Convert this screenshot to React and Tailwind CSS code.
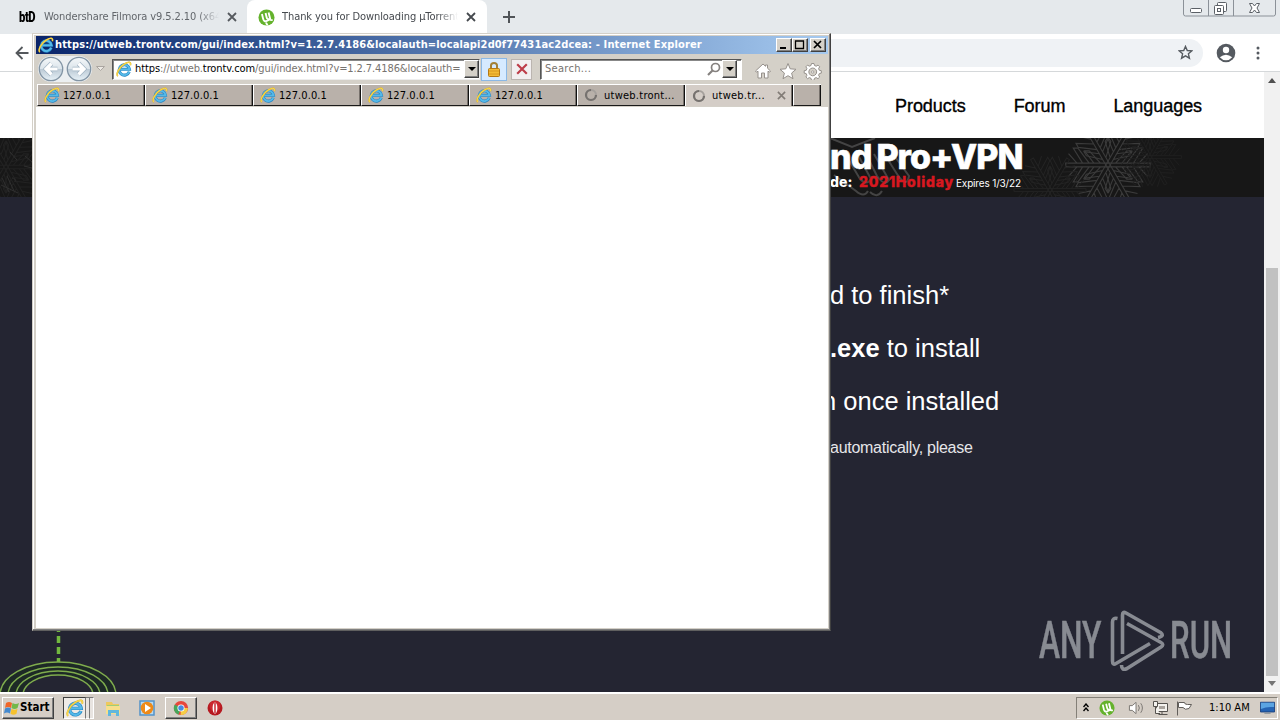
import React from "react";

const tahoma = "font-['DejaVu_Sans_Condensed','DejaVu_Sans',sans-serif] [font-stretch:condensed]";
const raised = "border border-t-white border-l-white border-r-[#404040] border-b-[#404040] shadow-[inset_-1px_-1px_0_#808080]";

function IELogo({ className }) {
  return (
    <svg viewBox="0 0 18 18" className={className}>
      <path d="M14.900 12A5.800 5.800 0 1 1 15.200 9.400H5" fill="none" stroke="#2686c4" strokeWidth="3.400" />
      <path d="M14.900 12A5.800 5.800 0 1 1 15.200 9.400H5" fill="none" stroke="#55b9e8" strokeWidth="2.200" />
      <path d="M2.200 16.800C-.7 15.500 3.600 6.600 9.400 3.300 14.200.5 17.300.8 16.200 4.700" fill="none" stroke="#d9a928" strokeWidth="1.800" />
      <path d="M2.200 16.800C-.7 15.500 3.600 6.600 9.400 3.300 14.200.5 17.300.8 16.200 4.700" fill="none" stroke="#f6d84a" strokeWidth="1.300" />
    </svg>
  );
}

function UTorrent({ className }) {
  return (
    <svg viewBox="0 0 18 18" className={className}>
      <circle cx="9" cy="9" r="8.5" fill="#64b22c" />
      <path d="M4.2 5.2 5.500 10.700Q6.400 13.900 9.300 12.700L12.500 11.100M8 4.200 9.200 9.100Q9.800 11.400 11.800 10.400M11.200 3.600 13 10.800Q13.500 12.400 15.500 11.400M8.500 14.200Q9 16 10.300 17" fill="none" stroke="#fff" strokeWidth="2" />
    </svg>
  );
}

function Close({ className }) {
  return (
    <svg viewBox="0 0 10 10" className={className}>
      <path d="m1 1 8 8M9 1 1 9" fill="none" stroke="currentColor" strokeWidth="1.8" />
    </svg>
  );
}

function ChromeTabs() {
  return (
    <div className="flex h-[34px] shrink-0 bg-[#e5e9ec]">
      <div className="flex w-[247px] items-center pl-[19px]">
        <span className="w-[25px] font-['Roboto',sans-serif] text-[14px] leading-4 font-black tracking-[-0.500px] text-black">
          <span className="inline-block origin-left scale-x-[.8]">btD</span>
        </span>
        <span className={`w-[175px] overflow-hidden text-[11px] whitespace-nowrap text-[#62666b] tracking-[-0.08px] ${tahoma} [mask-image:linear-gradient(90deg,#000_88%,transparent)]`}>Wondershare Filmora v9.5.2.10 (x64)</span>
        <Close className="ml-[8px] size-[10px] text-[#55595e]" />
      </div>
      <div className="flex w-[240px] items-center rounded-t-lg bg-white pl-[11px]">
        <UTorrent className="size-[17px]" />
        <span className={`ml-[7px] w-[176px] overflow-hidden text-[11px] whitespace-nowrap text-[#45494e] tracking-[-0.08px] ${tahoma} [mask-image:linear-gradient(90deg,#000_88%,transparent)]`}>Thank you for Downloading µTorrent</span>
        <Close className="ml-[8px] size-[10px] text-[#45494e]" />
      </div>
      <svg viewBox="0 0 12 12" className="mt-[11px] ml-[16px] size-[12px]">
        <path d="M6 0v12M0 6h12" stroke="#505458" strokeWidth="2" />
      </svg>
      <svg viewBox="0 0 94 18" className="mr-[3px] ml-auto h-[18px] w-[94px]">
        <path d="M.500 0v14q0 2 2 2h88q2 0 2-2V0M25.500 0v16M50.500 0v16" fill="none" stroke="#8b9198" />
        <g fill="#fff" stroke="#5b6066">
          <rect x="7.500" y="8.500" width="11" height="4" rx="1" />
          <rect x="34.500" y="2.500" width="9" height="9" rx="1" />
          <rect x="31.500" y="5.500" width="9" height="9" rx="1" />
          <rect x="34.500" y="8.500" width="3" height="3" />
          <path d="M66.500 3.500h3l2 2.500 2-2.500h3L74 8l2.500 4.500h-3l-2-2.500-2 2.500h-3L69 8z" />
        </g>
      </svg>
    </div>
  );
}

function ChromeToolbar() {
  return (
    <div className="flex h-[38px] shrink-0 items-center border-b border-[#d5d8da] bg-white">
      <svg viewBox="0 0 14 14" className="ml-[15px] size-[14px]">
        <path d="M13.500 7H1.500M7.500 1 1.500 7l6 6" fill="none" stroke="#54585c" strokeWidth="1.800" />
      </svg>
      <div className="ml-[40px] flex h-[28px] w-[1134px] items-center justify-end rounded-full bg-[#eff2f5] pr-[10px]">
        <svg viewBox="0 0 16 16" className="size-[15px]">
          <path d="m8 1.500 1.900 4.400 4.700.4-3.500 3.100 1.100 4.700L8 11.600l-4.200 2.500 1.100-4.700-3.500-3.100 4.700-.4z" fill="none" stroke="#565b60" strokeWidth="1.500" />
        </svg>
      </div>
      <svg viewBox="0 0 20 20" className="ml-[13px] size-[20px]">
        <circle cx="10" cy="10" r="9.300" fill="#555a60" />
        <circle cx="10" cy="7" r="3.200" fill="#fff" />
        <path d="M3.800 14.200Q10 9.200 16.200 14.200 13.500 17.300 10 17.300T3.800 14.200" fill="#fff" />
      </svg>
      <svg viewBox="0 0 4 14" className="ml-[20px] h-[14px] w-[4px]" fill="#555a60">
        <circle cx="2" cy="2" r="1.500" /><circle cx="2" cy="7" r="1.500" /><circle cx="2" cy="12" r="1.500" />
      </svg>
    </div>
  );
}

function Snowflake({ className }) {
  return (
    <svg viewBox="-50 -50 100 100" className={className} fill="none" stroke="currentColor" strokeWidth="1.200">
      {[30, 90, 150, 210, 270, 330].map((a) => (
        <g key={a} transform={`rotate(${a})`}>
          <path d="M-2 0V-45H2V0M-2-8-15-20V-25L-2-15M2-8 15-20V-25L2-15M-2-20-18-32V-37L-2-27M2-20 18-32V-37L2-27M-2-33-12-42M2-33 12-42" />
        </g>
      ))}
    </svg>
  );
}

function Banner() {
  return (
    <div className="relative h-[59px] shrink-0 overflow-hidden bg-[#171717]">
      <Snowflake className="absolute top-[-20px] left-[1061px] size-[94px] text-[#3b3b3b]" />
      <Snowflake className="absolute top-[-16px] left-[1115px] size-[70px] text-[#202020]" />
      <Snowflake className="absolute top-[12px] left-[1010px] size-[80px] text-[#242424]" />
      <Snowflake className="absolute top-[-15px] left-[-38px] size-[88px] text-[#222]" />
      <svg viewBox="0 0 32 59" className="absolute top-0 left-0 h-[59px] w-[32px]" fill="none" stroke="#303030">
        <path d="M2 40 9 54M7 38l7 15M12 40q4 0 3 4M1 47l17 8M25 18l7 6M24 28l8 2M10 14l7 8" />
      </svg>
      <svg viewBox="0 0 100 59" className="absolute top-0 left-[825px] h-[59px] w-[100px]" fill="none" stroke="#444" strokeWidth="2">
        <path d="M5 0 27 9 50 0M22 19 35 41Q42 48 46 41L33 17M41 16 52 38Q60 49 64 42L49 16M58 14 72 36Q82 51 84 38L68 16M9 37 31 53Q39 60 43 53M45 54Q52 61 57 53" />
      </svg>
      <div className="relative ml-[830px] font-['Inter',sans-serif] whitespace-nowrap text-white">
        <div className="h-[37px] text-[34px] leading-[37px] font-extrabold tracking-[-0.950px] [-webkit-text-stroke:0.600px_white]">nd<span className="ml-[5px]">Pro+VPN</span></div>
        <div className="flex items-baseline text-[14px] leading-[14px] font-extrabold">
          <span className="w-[29px] tracking-[0.100px]">de:</span>
          <span className="w-[97px] text-[#d71820] tracking-[0.780px] [-webkit-text-stroke:0.400px_#d71820]">2021Holiday</span>
          <span className="text-[10px] font-normal tracking-[-0.160px]">Expires 1/3/22</span>
        </div>
      </div>
    </div>
  );
}

function Watermark() {
  return (
    <div className="absolute top-[538px] left-[1039px] flex h-[62px] w-[194px] items-center font-['Roboto',sans-serif] text-[52px] leading-[62px] font-medium text-[#888b92]">
      <span className="w-[71px] [-webkit-text-stroke:0.500px_#888b92]"><span className="inline-block origin-left scale-x-[.61]">ANY</span></span>
      <svg viewBox="0 0 56 62" className="h-[62px] w-[56px] shrink-0" fill="none" stroke="currentColor" strokeWidth="3.600" strokeLinejoin="round">
        <path d="M7.500 8.500Q2.500 7.500 2.500 12V51Q2.500 55.500 6 53.500L40 33.500" />
        <path d="M12.500 44V5Q12.500 1 16 3L50.500 22.500Q55 26 48 27.500" />
        <path d="M17 13.500 51 32.500Q54.500 34.500 51 37L17 58.500Q11.500 61 11.500 55" />
      </svg>
      <span className="ml-[4px] [-webkit-text-stroke:0.500px_#888b92]"><span className="inline-block origin-left scale-x-[.600]">RUN</span></span>
    </div>
  );
}

function WebPage() {
  return (
    <div className="flex h-[620px] shrink-0">
      <div className="relative flex w-[1264px] flex-col overflow-hidden bg-[#242532] font-['Liberation_Sans',sans-serif]">
        <div className="flex h-[66px] shrink-0 items-center gap-[48px] bg-white pt-[2px] pl-[895px] text-[18px] tracking-[-0.050px] text-black [-webkit-text-stroke:0.350px_black]">
          <span>Products</span><span>Forum</span><span>Languages</span>
        </div>
        <Banner />
        <div className="ml-[830px] pt-[72px] text-[25.500px] whitespace-nowrap text-white">
          <p className="h-[53px] leading-[53px]">d to finish*</p>
          <p className="h-[53px] leading-[53px]"><b>.exe</b> to install</p>
          <p className="-ml-[8px] h-[53px] leading-[53px]">n once installed</p>
          <p className="h-[40px] text-[16px] leading-[40px] tracking-[-0.270px] text-[#e6e6e9]">automatically, please</p>
        </div>
        <svg viewBox="0 0 120 62" className="absolute bottom-0 left-0 h-[62px] w-[120px]" fill="none" stroke="#7fac4d" strokeWidth="1.400">
          <path d="M58.500 1V32" stroke="#72b83f" strokeWidth="3.500" strokeDasharray="7 4" strokeDashoffset="6" />
          <ellipse cx="58" cy="65" rx="58" ry="33" fill="#1d2926" />
          <ellipse cx="58" cy="65" rx="50" ry="28" /><ellipse cx="58" cy="65" rx="42" ry="24" />
          <ellipse cx="58" cy="65" rx="35" ry="20" fill="#242532" />
        </svg>
        <Watermark />
      </div>
      <div className="flex w-[16px] flex-col items-center bg-[#f1f1f1]">
        <svg viewBox="0 0 16 16" className="size-[16px]"><path d="M4 11 8 6l4 5z" fill="#505050" /></svg>
        <div className="mt-[180px] h-[408px] w-[12px] bg-[#c1c1c1]" />
        <svg viewBox="0 0 16 16" className="size-[16px]"><path d="M4 5h8l-4 5z" fill="#757575" /></svg>
      </div>
    </div>
  );
}

function CaptionButton({ kind }) {
  return (
    <span className={`h-[14px] w-[16px] bg-[#d4d0c8] ${raised}`}>
      <svg viewBox="0 0 14 12" className="h-[12px] w-[14px]" fill="none" stroke="#000">
        {kind === "min" && <path d="M3 9h6" strokeWidth="2" />}
        {kind === "max" && <path d="M2.500 1.500v8h8v-8M2 2h9" strokeWidth="1.300" />}
        {kind === "close" && <path d="m3 2 7 7m0-7-7 7" strokeWidth="1.700" />}
      </svg>
    </span>
  );
}

function DropButton() {
  return (
    <span className={`flex h-[18px] w-[15px] shrink-0 items-center justify-center bg-[#d4d0c8] ${raised}`}>
      <svg viewBox="0 0 8 4" className="h-[4px] w-[8px]"><path d="M0 0h8L4 4z" /></svg>
    </span>
  );
}

function NavCircle({ flip }) {
  return (
    <svg viewBox="0 0 26 26" className="size-[26px] shrink-0">
      <defs><linearGradient id="orb" x2="0" y2="1"><stop stopColor="#f5f8fa" /><stop offset=".48" stopColor="#dce5eb" /><stop offset=".52" stopColor="#bdcbd6" /><stop offset="1" stopColor="#e8f2f8" /></linearGradient></defs>
      <circle cx="13" cy="13" r="11.700" fill="url(#orb)" stroke="#8294a4" strokeWidth="1.300" />
      <g transform={flip ? "rotate(180 13 13)" : undefined} fill="none">
        <path d="M19.500 13H8.500M13.500 7.500 8 13l5.500 5.500" stroke="#a1b4c3" strokeWidth="4.600" />
        <path d="M19.500 13H8.500M13.500 7.500 8 13l5.500 5.500" stroke="#fff" strokeWidth="3.200" />
      </g>
    </svg>
  );
}

function Spinner() {
  return (
    <svg viewBox="0 0 14 14" className="size-[14px] shrink-0" fill="none">
      <circle cx="7" cy="7" r="5" stroke="#a5a09c" strokeWidth="2" />
      <path d="M7 2a5 5 0 1 0 5 5" stroke="#76726f" strokeWidth="2.200" />
    </svg>
  );
}

function IEWindow() {
  return (
    <div className={`absolute top-[33px] left-[32px] flex h-[598px] w-[799px] flex-col border border-t-[#d4d0c8] border-l-[#d4d0c8] border-r-[#404040] border-b-[#606060] bg-[#d4d0c8] pt-[2px] pr-px pb-px pl-[3px] shadow-[inset_-1px_-1px_0_#808080,inset_1px_1px_0_#fff] text-[11px] ${tahoma}`}>
      <div className="mr-px flex h-[18px] shrink-0 items-center bg-linear-to-r from-[#0a246a] to-[#a6caf0] pr-[2px] pl-[2px] text-white">
        <IELogo className="size-[16px]" />
        <span className="ml-px pt-px font-bold whitespace-nowrap tracking-[0.135px]">https://utweb.trontv.com/gui/index.html?v=1.2.7.4186&amp;localauth=localapi2d0f77431ac2dcea: - Internet Explorer</span>
        <span className="ml-auto flex"><CaptionButton kind="min" /><CaptionButton kind="max" /><span className="ml-[2px] flex"><CaptionButton kind="close" /></span></span>
      </div>
      <div className="flex h-[30px] shrink-0 items-center pl-[2px]">
        <div className="flex gap-[2px] rounded-full bg-[#eceff1]"><NavCircle /><NavCircle flip /></div>
        <svg viewBox="0 0 9 6" className="ml-[4px] h-[6px] w-[9px]"><path d="M.5.500h8l-4 4z" fill="#ece9e4" stroke="#aaa5a0" /></svg>
        <div className="ml-[7px] flex h-[21px] w-[368px] items-center border border-t-[#555] border-l-[#555] border-[#eee] bg-white shadow-[inset_1px_1px_0_#888]">
          <IELogo className="ml-[3px] size-[16px]" />
          <span className="ml-[3px] flex-1 overflow-hidden pt-px whitespace-nowrap text-[#77736f] tracking-[-0.100px]"><span className="text-black">https</span>://utweb.<span className="text-black">trontv.com</span>/gui/index.html?v=1.2.7.4186&amp;localauth=</span>
          <DropButton />
        </div>
        <div className="ml-px flex h-[23px] w-[26px] items-center justify-center border border-[#8bb8e5] bg-[#d6eaff]">
          <svg viewBox="0 0 14 16" className="h-[16px] w-[14px]">
            <path d="M4 8V4.500Q4 2 7 2t3 2.500V8" fill="none" stroke="#a38136" strokeWidth="2" />
            <rect x="1.500" y="7.500" width="11" height="8" rx="1" fill="#f3bb35" stroke="#b57814" />
            <path d="M2 10h10M2 13h10" stroke="#d99621" />
          </svg>
        </div>
        <div className="ml-[4px] flex h-[21px] w-[21px] items-center justify-center border border-[#bbb5b0] bg-[#f2eff0]">
          <Close className="size-[12px] text-[#bd3d49]" />
        </div>
        <div className="ml-[8px] flex h-[21px] w-[202px] items-center border border-t-[#555] border-l-[#555] border-white bg-white pl-[4px] text-[#77736f] shadow-[inset_1px_1px_0_#888]">
          <span className="pt-px tracking-[0.300px]">Search...</span>
          <svg viewBox="0 0 14 14" className="mr-px ml-auto size-[14px]" fill="none" stroke="#85817f" strokeWidth="1.700"><circle cx="8.500" cy="5.500" r="4" /><path d="m5.500 8.500-4.500 4.500" strokeWidth="2.200" /></svg>
          <DropButton /><span className="w-[4px]" />
        </div>
        <svg viewBox="0 0 68 18" className="mt-[3px] ml-[12px] h-[18px] w-[68px]" fill="#fff" stroke="#96918c">
          <path d="M1.500 9 9 2l2.500 2.300V3h2v3.200L16.500 9l-1 1.200-1.500-1V16h-3.500v-5h-3v5H4V9.200l-1.500 1z" />
          <path d="m34 1.500 2.200 5.300 5.800.5-4.400 3.800L39 16.700l-5-3-5 3 1.400-5.600L26 7.300l5.800-.5z" />
          <path fillRule="evenodd" d="m57.500 1.500 2.500 0 .5 2 1.700.7 1.800-1.100 1.700 1.700L64.600 6.600l.7 1.700 2 .4v2.400l-2 .5-.7 1.700 1.100 1.700-1.700 1.700-1.800-1.100-1.700.7-.5 2h-2.500l-.5-2-1.700-.7-1.700 1.100-1.700-1.700 1-1.700-.7-1.700-2-.5V8.700l2-.4.7-1.700-1-1.800 1.700-1.700 1.700 1.100 1.700-.7zM58.700 6a3.900 3.900 0 1 0 .1 0z" />
          <circle cx="58.700" cy="10" r="1.200" stroke="#a5a09b" />
        </svg>
      </div>
      <div className="flex h-[23px] shrink-0 pl-px">
        {[0, 1, 2, 3, 4, 5, 6].map((i) => (
          <div key={i} className={`flex h-[22px] w-[108px] items-center border-t border-l border-white pl-[6px] shadow-[inset_-1px_0_0_#111,inset_-2px_0_0_#77716c] ${i === 6 ? "bg-[#d4cdc7]" : "border-b border-b-[#1a1a1a] bg-[#b9b1aa]"}`}>
            {i < 5 ? <IELogo className="size-[16px] shrink-0" /> : <Spinner />}
            <span className={`pt-[2px] whitespace-nowrap text-black ${i < 5 ? "ml-[3px] tracking-[0.080px]" : "ml-[6px] tracking-[0.250px]"}`}>{i < 5 ? "127.0.0.1" : i === 5 ? "utweb.tront..." : "utweb.tr..."}</span>
            {i === 6 && <Close className="mr-[7px] ml-auto size-[9px] text-[#827c77]" />}
          </div>
        ))}
        <div className="h-[22px] w-[28px] border-t border-l border-b border-white border-b-[#1a1a1a] bg-[#b9b1aa] shadow-[inset_-1px_0_0_#111,inset_-2px_0_0_#77716c]" />
      </div>
      <div className="flex-1 border-r border-b border-[#d4d0c8] bg-white" />
    </div>
  );
}

function Taskbar() {
  return (
    <div className={`flex h-[28px] shrink-0 items-center border-t-2 border-white bg-[#d5cec6] pt-px pl-[2px] text-[11px] text-black ${tahoma}`}>
      <div className={`flex h-[22px] w-[52px] items-center ${raised}`}>
        <svg viewBox="0 0 16 16" className="ml-px size-[16px]">
          <path d="M2 3Q5 1 8 3L7 8Q4 6 1 8z" fill="#ef6629" /><path d="M8.500 3q3 2 6.500 0l-1.500 5q-3 2-6 0z" fill="#72b84a" />
          <path d="M1 8.500q3-2 6 0l-1 5q-3-2-6 0z" fill="#4389cf" /><path d="M7.500 8.700q3 2 6 0l-1 5q-3 2-6 0z" fill="#f6c22e" />
        </svg>
        <span className="text-[11.500px] font-bold">Start</span>
      </div>
      <div className="ml-[9px] flex h-[22px] w-[23px] items-center justify-center border border-t-[#404040] border-l-[#404040] border-r-[#777] border-b-white bg-[#eeeae6]"><IELogo className="size-[18px]" /></div>
      <div className="h-[22px] w-[4px] border border-l-0 border-t-[#777] border-r-[#777] border-b-white bg-[#e8e4e0]" />
      <div className="h-[22px] w-[4px] border border-l-0 border-t-[#777] border-white bg-[#e8e4e0]" />
      <svg viewBox="0 0 18 18" className="ml-[10px] size-[18px]">
        <path d="M2 3h6l1 2h6v10H2z" fill="#eec95d" /><path d="M3 6h12v3H3z" fill="#9dcf79" /><path d="M2 7h14v8H2z" fill="#f7df8c" /><path d="M4 17v-6h11v6h-3v-3H7v3z" fill="#60b7dd" />
      </svg>
      <svg viewBox="0 0 18 18" className="ml-[16px] size-[18px]">
        <path d="M2 2h14v14H2z" fill="#b7daf2" stroke="#5393c9" strokeWidth="1.500" /><circle cx="9" cy="9" r="6.300" fill="#ee8a18" /><path d="m7 5 6 4-6 4z" fill="#fff" />
      </svg>
      <div className={`ml-[9px] flex h-[22px] w-[32px] items-center justify-center ${raised}`}>
        <svg viewBox="0 0 18 18" className="size-[16px]">
          <circle cx="9" cy="9" r="8" fill="#e7473c" /><path d="M2 5 9 9 6 16.500A8 8 0 0 1 2 5" fill="#46a65a" /><path d="M9 9h7.800A8 8 0 0 1 8.500 17z" fill="#f6ce45" /><circle cx="9" cy="9" r="4" fill="#fff" /><circle cx="9" cy="9" r="3.100" fill="#498be0" />
        </svg>
      </div>
      <svg viewBox="0 0 16 16" className="ml-[10px] size-[16px]"><circle cx="8" cy="8" r="7.500" fill="#b61920" /><circle cx="8" cy="6" r="5.500" fill="#d8323a" opacity=".6" /><ellipse cx="8" cy="8" rx="2.400" ry="5.500" fill="#fff" /><path d="M8 3v10" stroke="#c51f29" strokeWidth="1.400" /></svg>
      <div className="mr-[2px] ml-auto flex h-[22px] w-[202px] items-center border border-t-[#848078] border-l-[#848078] border-r-white border-b-white">
        <svg viewBox="0 0 6 9" className="ml-[6px] h-[9px] w-[6px]" fill="none" stroke="#000" strokeWidth="1.400"><path d="m.5 4 2.500-3 2.500 3M.5 8 3 5l2.500 3" /></svg>
        <UTorrent className="ml-[10px] size-[16px]" />
        <svg viewBox="0 0 18 16" className="ml-[13px] h-[16px] w-[17px]" fill="#fff" stroke="#77736f"><path d="M1.500 5.500h3L8.500 2v12L4.500 10.500h-3z" /><path d="M11 5q2 3 0 6M13.500 3q3.500 5 0 10" fill="none" /></svg>
        <svg viewBox="0 0 17 16" className="ml-[7px] h-[16px] w-[17px]" fill="#f4f2ee" stroke="#56534f"><path d="M4.500 3.500h11v8h-11zM6.500 14.500h9M10 12v2" /><path d="M1.500 1.500h4v5h-4zM3.500 6.500v7H8" /><path d="M7 6h6v3H7z" fill="#aaa49e" stroke="none" /></svg>
        <svg viewBox="0 0 17 16" className="ml-[7px] h-[16px] w-[17px]" fill="#fff" stroke="#625e5a"><path d="M1.500 1.500v14M2.500 2.500h6q0 2 3 2h4L13 8.500q-4 2-6-1H2.500z" /></svg>
        <span className="ml-[16px] pt-px whitespace-nowrap">1:10 AM</span>
        <svg viewBox="0 0 17 14" className="mr-[2px] ml-auto h-[14px] w-[15px]"><path d="M.5.500h16v11H.500z" fill="#2563b3" stroke="#173e7b" /><path d="M1 1h15v5Q8 5 1 8z" fill="#5ba4e2" /><path d="M5 13h7" stroke="#78838d" /></svg>
      </div>
    </div>
  );
}

export default function App() {
  return (
    <div className="relative flex h-[720px] w-[1280px] flex-col overflow-hidden bg-white">
      <ChromeTabs />
      <ChromeToolbar />
      <WebPage />
      <Taskbar />
      <IEWindow />
    </div>
  );
}
